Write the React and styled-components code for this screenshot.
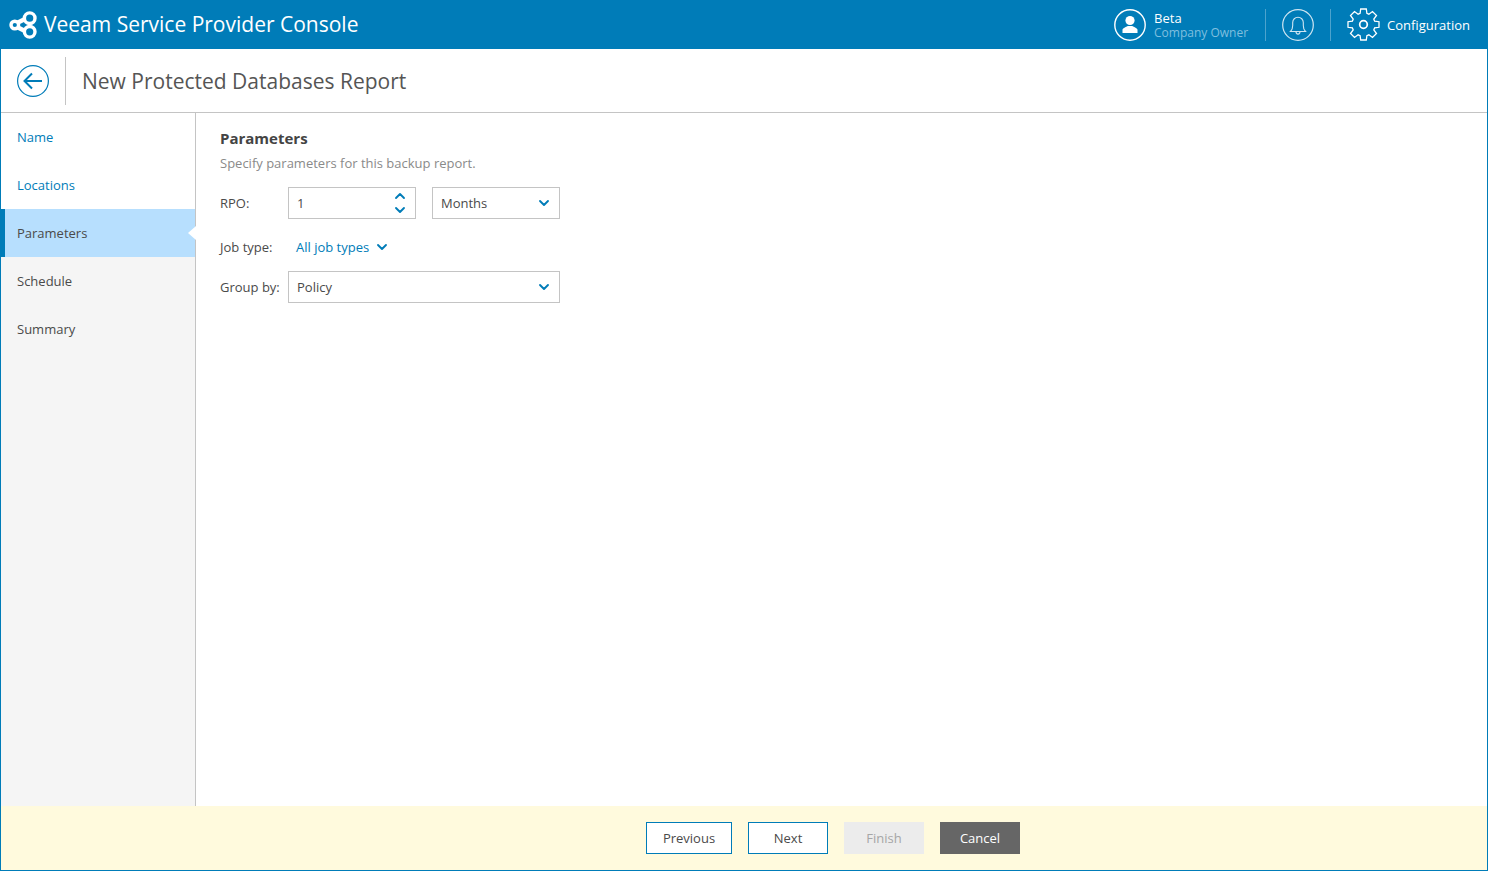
import React from "react";
import styled, { createGlobalStyle } from "styled-components";
import { ChevronDown, ChevronUp } from "lucide-react";

const BLUE = "#007cb8";

const GlobalStyle = createGlobalStyle`
  html, body {
    margin: 0;
    padding: 0;
    height: 100%;
    overflow: hidden;
  }
  body {
    font-family: "Open Sans", "Noto Sans", sans-serif;
    font-size: 13px;
    color: #4a4a4a;
    background: #fff;
  }
  #root {
    height: 100%;
  }
`;

const Page = styled.div`
  height: 871px;
  box-sizing: border-box;
  display: flex;
  flex-direction: column;
  border: 1px solid ${BLUE};
  border-top: 0;
`;

const Header = styled.header`
  height: 49px;
  margin: 0 -1px;
  flex: none;
  background: ${BLUE};
  display: flex;
  align-items: center;
  color: #fff;
`;

const Logo = styled.svg`
  width: 30px;
  height: 30px;
  margin-left: 8px;
  flex: none;
`;

const Brand = styled.div`
  margin: 0 0 1px 6px;
  font-size: 21px;
  line-height: 30px;
`;

const HeaderRight = styled.div`
  margin-left: auto;
  display: flex;
  align-items: center;
  height: 100%;
  padding-right: 18px;
`;

const RoundIcon = styled.svg`
  width: 32px;
  height: 32px;
  flex: none;
`;

const UserText = styled.div`
  margin: 0 1px 0 8px;
  display: flex;
  flex-direction: column;
`;

const UserName = styled.span`
  color: #fff;
  font-size: 13px;
  line-height: 15px;
  margin-top: 1px;
`;

const UserRole = styled.span`
  color: #7fbfdf;
  font-size: 12px;
  line-height: 14px;
`;

const HeaderDivider = styled.div`
  width: 1px;
  height: 32px;
  background: #4da3cd;
  margin: 0 16px;
`;

const GearIcon = styled.svg`
  width: 33px;
  height: 33px;
  flex: none;
`;

const ConfigLabel = styled.span`
  margin-left: 7px;
  font-size: 13px;
`;

const TitleBar = styled.div`
  height: 64px;
  flex: none;
  box-sizing: border-box;
  border-bottom: 1px solid #c4c4c4;
  display: flex;
  align-items: center;
  padding-left: 16px;
`;

const BackIcon = styled.svg`
  width: 32px;
  height: 32px;
  flex: none;
`;

const TitleDivider = styled.div`
  width: 1px;
  height: 48px;
  background: #c4c4c4;
  margin: 0 16px;
`;

const Title = styled.h1`
  margin: 0;
  font-size: 21px;
  font-weight: 400;
  color: #555;
  line-height: 30px;
`;

const Body = styled.div`
  flex: 1;
  display: flex;
  min-height: 0;
`;

const Sidebar = styled.nav`
  width: 194px;
  flex: none;
  border-right: 1px solid #c4c4c4;
  background: #f5f5f5;
  display: flex;
  flex-direction: column;
`;

const Step = styled.div`
  position: relative;
  height: 48px;
  box-sizing: border-box;
  display: flex;
  align-items: center;
  padding-left: ${(p) => (p.$active ? "12px" : "16px")};
  font-size: 13px;
  color: ${(p) => (p.$done ? BLUE : "#4a4a4a")};
  background: ${(p) => (p.$active ? "#b7dffe" : p.$done ? "#fff" : "transparent")};
  border-left: ${(p) => (p.$active ? `4px solid ${BLUE}` : "0")};

  ${(p) =>
    p.$active &&
    `&::after {
      content: "";
      position: absolute;
      right: -1px;
      top: 17px;
      border-style: solid;
      border-width: 7px 8px 7px 0;
      border-color: transparent #fff transparent transparent;
    }`}
`;

const Content = styled.main`
  flex: 1;
  padding: 15px 24px;
`;

const SectionTitle = styled.h2`
  margin: 0;
  font-size: 15px;
  font-weight: 700;
  line-height: 20px;
  color: #444;
`;

const SectionHint = styled.p`
  margin: 5px 0 0;
  font-size: 13px;
  line-height: 20px;
  color: #8a8a8a;
`;

const FormGrid = styled.div`
  margin-top: 14px;
  display: grid;
  grid-template-columns: 68px 128px 16px 128px;
  grid-template-rows: 32px 28px 32px;
  row-gap: 12px;
  align-items: center;
`;

const Label = styled.label`
  font-size: 13px;
  color: #4a4a4a;
  white-space: nowrap;
  padding-top: ${(p) => p.$nudge || 0}px;
`;

const Field = styled.div`
  height: 32px;
  box-sizing: border-box;
  border: 1px solid #c4c4c4;
  background: #fff;
  display: flex;
  align-items: center;
  justify-content: space-between;
  padding: 0 7px 0 8px;
  font-size: 13px;
  color: #4a4a4a;
  grid-column: ${(p) => p.$column || "auto"};
`;

const Spinner = styled.div`
  display: flex;
  flex-direction: column;
  align-items: center;
  color: ${BLUE};

  svg + svg {
    margin-top: -2px;
  }
`;

const LinkSelect = styled.div`
  grid-column: 2 / 5;
  display: flex;
  align-items: center;
  gap: 5px;
  padding: 4px 0 0 8px;
  color: ${BLUE};
  font-size: 13px;
`;

const Footer = styled.footer`
  height: 64px;
  flex: none;
  background: #fffadd;
  display: flex;
  align-items: center;
  justify-content: center;
  gap: 16px;
  padding-left: 178px;
`;

const Button = styled.button`
  width: ${(p) => p.$width || 80}px;
  height: 32px;
  box-sizing: border-box;
  padding: 0;
  font-family: inherit;
  font-size: 13px;
  border: 1px solid ${(p) => (p.$variant === "outline" ? BLUE : "transparent")};
  background: ${(p) =>
    p.$variant === "outline" ? "#fff" : p.$variant === "dark" ? "#666" : "#ececec"};
  color: ${(p) =>
    p.$variant === "outline" ? "#4a4a4a" : p.$variant === "dark" ? "#fff" : "#a6a6a6"};
`;

// outline gear with 8 teeth, traced as one closed path
const gearPath = (() => {
  const cx = 16.5;
  const cy = 16.5;
  const pts = [];
  for (let i = 0; i < 8; i++) {
    const a = (i * Math.PI) / 4 - Math.PI / 2;
    [
      [-0.3, 11.6],
      [-0.18, 15.8],
      [0.18, 15.8],
      [0.3, 11.6],
    ].forEach(([d, r]) => {
      pts.push(`${(cx + r * Math.cos(a + d)).toFixed(1)} ${(cy + r * Math.sin(a + d)).toFixed(1)}`);
    });
  }
  return `M${pts.join("L")}Z`;
})();

const steps = [
  { name: "Name", done: true },
  { name: "Locations", done: true },
  { name: "Parameters", active: true },
  { name: "Schedule" },
  { name: "Summary" },
];

export default function App() {
  return (
    <Page>
      <GlobalStyle />
      <Header>
        <Logo viewBox="0 0 30 30" fill="none" stroke="#fff" strokeWidth="3.4">
          <circle cx="6.8" cy="15" r="3.8" />
          <circle cx="21.7" cy="8.2" r="5.3" />
          <circle cx="21.7" cy="21.8" r="5.3" />
          <path d="M10 12.5l6-3M10 17.5l6 3" strokeWidth="4.5" />
        </Logo>
        <Brand>Veeam Service Provider Console</Brand>
        <HeaderRight>
          <RoundIcon viewBox="0 0 32 32">
            <circle cx="16" cy="16" r="15.2" fill="none" stroke="#fff" strokeWidth="1.4" />
            <circle cx="16" cy="11.5" r="4.6" fill="#fff" />
            <path d="M8.5 24v-3.2c0-1.6 3.4-2.8 5.2-3.8h4.6c1.8 1 5.2 2.2 5.2 3.8V24z" fill="#fff" />
          </RoundIcon>
          <UserText>
            <UserName>Beta</UserName>
            <UserRole>Company Owner</UserRole>
          </UserText>
          <HeaderDivider />
          <RoundIcon viewBox="0 0 32 32">
            <circle cx="16" cy="16" r="15.3" fill="none" stroke="#cfe6f2" strokeWidth="1.2" />
            <path
              d="M8.5 22.5c1.6-1.5 2.2-3 2.2-6v-3a5.3 5.3 0 0 1 10.6 0v3c0 3 .6 4.5 2.2 6zM14 22.5c0 1.6.9 2.6 2 2.6s2-1 2-2.6"
              fill="none"
              stroke="#cfe6f2"
              strokeWidth="1.1"
            />
          </RoundIcon>
          <HeaderDivider />
          <GearIcon viewBox="0 0 33 33" fill="none" stroke="#fff" strokeWidth="1.3">
            <path d={gearPath} />
            <circle cx="16.5" cy="16.5" r="3.8" strokeWidth="1.7" />
          </GearIcon>
          <ConfigLabel>Configuration</ConfigLabel>
        </HeaderRight>
      </Header>
      <TitleBar>
        <BackIcon viewBox="0 0 32 32" fill="none" stroke={BLUE}>
          <circle cx="16" cy="16" r="15.4" strokeWidth="1.2" />
          <path d="M25 16H8M15 8.5L7.5 16l7.5 7.5" strokeWidth="2" />
        </BackIcon>
        <TitleDivider />
        <Title>New Protected Databases Report</Title>
      </TitleBar>
      <Body>
        <Sidebar>
          {steps.map((s) => (
            <Step key={s.name} $done={s.done} $active={s.active}>
              {s.name}
            </Step>
          ))}
        </Sidebar>
        <Content>
          <SectionTitle>Parameters</SectionTitle>
          <SectionHint>Specify parameters for this backup report.</SectionHint>
          <FormGrid>
            <Label>RPO:</Label>
            <Field>
              1
              <Spinner>
                <ChevronUp size={16} strokeWidth={2.8} />
                <ChevronDown size={16} strokeWidth={2.8} />
              </Spinner>
            </Field>
            <span />
            <Field>
              Months
              <ChevronDown size={16} strokeWidth={2.8} color={BLUE} />
            </Field>
            <Label $nudge={4}>Job type:</Label>
            <LinkSelect>
              All job types
              <ChevronDown size={16} strokeWidth={2.8} />
            </LinkSelect>
            <Label>Group by:</Label>
            <Field $column="2 / 5">
              Policy
              <ChevronDown size={16} strokeWidth={2.8} color={BLUE} />
            </Field>
          </FormGrid>
        </Content>
      </Body>
      <Footer>
        <Button $variant="outline" $width={86}>Previous</Button>
        <Button $variant="outline">Next</Button>
        <Button disabled>Finish</Button>
        <Button $variant="dark">Cancel</Button>
      </Footer>
    </Page>
  );
}
